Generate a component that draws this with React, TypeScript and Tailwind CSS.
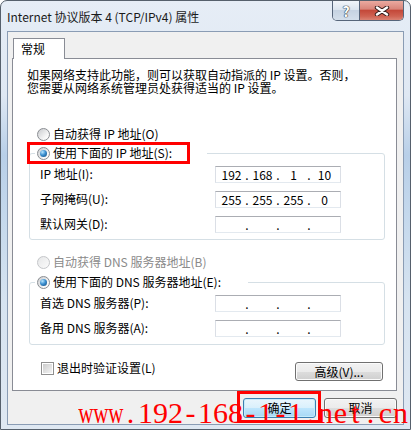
import React, { Fragment } from 'react';

function Radio({ checked, disabled }: { checked?: boolean; disabled?: boolean }) {
  return (
    <span
      className={
        disabled
          ? 'flex h-[13px] w-[13px] shrink-0 items-center justify-center rounded-full border border-[#c4c6c9] bg-[linear-gradient(135deg,#e6e7e8,#fbfbfb)]'
          : 'flex h-[13px] w-[13px] shrink-0 items-center justify-center rounded-full border border-[#8a8d92] bg-[linear-gradient(135deg,#c9cbce,#f7f7f7_70%,#ffffff)]'
      }
    >
      {checked && (
        <span className="h-[7px] w-[7px] rounded-full bg-[radial-gradient(circle_at_35%_30%,#b9e6ff_0%,#3a8fd0_45%,#12487a_100%)]" />
      )}
    </span>
  );
}

function IpField({ values }: { values?: string[] }) {
  const v = values ?? ['', '', '', ''];
  return (
    <div className="flex h-[17px] w-[126px] items-center border border-[#abadb3] border-b-[#e3e9ef] border-l-[#dbdfe6] border-r-[#dbdfe6] bg-white pl-[3px] leading-[15px]">
      {v.map((x, i) => (
        <Fragment key={i}>
          {i > 0 && <span className="w-[6px] text-center">.</span>}
          <span className="w-[25px] text-center">{x}</span>
        </Fragment>
      ))}
    </div>
  );
}

function WinButton({ children, primary, className }: { children: React.ReactNode; primary?: boolean; className?: string }) {
  return (
    <div
      className={
        (primary
          ? 'border-[#3c7fb1] bg-[linear-gradient(180deg,#eaf6fd_0%,#d9f0fc_50%,#bee6fd_51%,#a7d9f5_100%)] shadow-[inset_0_0_0_1px_#c5ecfb] '
          : 'border-[#707070] bg-[linear-gradient(180deg,#f2f2f2_0%,#ebebeb_50%,#dddddd_51%,#cfcfcf_100%)] shadow-[inset_0_0_0_1px_#fbfbfb] ') +
        'flex items-center justify-center rounded-[3px] border ' +
        (className ?? '')
      }
    >
      {children}
    </div>
  );
}

const WATERMARK = 'www.192-168-1-1.net.cn';

export default function App() {
  return (
    <div className="relative h-[430px] w-[411px] overflow-hidden bg-white font-['Noto_Sans_CJK_SC',sans-serif] text-[12px] text-black">
      <div className="flex h-full w-full flex-col rounded-t-[7px] border border-[#56606c] bg-[linear-gradient(180deg,#e6edf6_0%,#dfe8f3_22%,#b8cfe8_36%,#c4d8ec_50%,#d6e3f0_70%,#dfe8f2_100%)]">
        {/* title bar */}
        <div className="flex h-[30px] shrink-0">
          <div className="flex items-center pl-[6px] pt-[2px] text-[12px] text-[#1a1a1a]">
            Internet 协议版本 4 (TCP/IPv4) 属性
          </div>
          <div className="ml-auto mr-[6px] flex h-[20px] self-start overflow-hidden rounded-b-[5px] border border-t-0 border-[#56657a]">
            <div className="flex w-[27px] items-center justify-center border-r border-[#56657a] bg-[linear-gradient(180deg,#f1f5fa_0%,#dce5ef_45%,#c6d3e2_50%,#d4dfeb_100%)]">
              <span className="text-[14px] font-bold leading-none text-white [text-shadow:0_0_1px_#2a3440,0_0_1px_#2a3440,0_0_1px_#2a3440]">
                ?
              </span>
            </div>
            <div className="flex w-[43px] items-center justify-center bg-[linear-gradient(180deg,#ebaaa0_0%,#d9857a_42%,#c4493a_50%,#cf6252_80%,#da8273_100%)]">
              <svg width="16" height="10" viewBox="0 0 16 10">
                <path d="M3 1.5 L13 8.5 M13 1.5 L3 8.5" stroke="#3b2220" strokeWidth="4.4" strokeLinecap="round" fill="none" />
                <path d="M3 1.5 L13 8.5 M13 1.5 L3 8.5" stroke="#ffffff" strokeWidth="2.4" strokeLinecap="round" fill="none" />
              </svg>
            </div>
          </div>
        </div>

        {/* client area */}
        <div className="mx-[6px] mb-[4px] flex flex-1 flex-col border border-[#8a9cb4] bg-[#f0f0f0] pl-[4px] pr-[6px] pt-[6px]">
          <div className="relative z-10 -mb-px ml-[1px] h-[21px] w-[52px] border border-b-0 border-[#898c95] bg-white pl-[7px] leading-[19px]">
            常规
          </div>
          <div className="flex h-[333px] flex-col border border-[#898c95] bg-white">
            <div className="mt-[9px] pl-[14px] leading-[13px]">
              <div>如果网络支持此功能，则可以获取自动指派的 IP 设置。否则，</div>
              <div>您需要从网络系统管理员处获得适当的 IP 设置。</div>
            </div>

            <div className="ml-[24px] mt-[33px] flex h-[14px] items-center gap-[3px]">
              <Radio />
              <span>自动获得 IP 地址(O)</span>
            </div>

            <div className="ml-[16px] mr-[11px] mt-[12px] flex flex-col rounded-[3px] border border-[#d5dfe5] pb-[6px] pl-[10px]">
              <div className="-ml-[5px] -mt-[8px] flex h-[14px] w-[172px] items-center gap-[3px] bg-white px-[2px]">
                <Radio checked />
                <span>使用下面的 IP 地址(S):</span>
              </div>
              <div className="mt-[5px] flex items-center">
                <span className="w-[175px]">IP 地址(I):</span>
                <IpField values={['192', '168', '1', '10']} />
              </div>
              <div className="mt-[7px] flex items-center">
                <span className="w-[175px]">子网掩码(U):</span>
                <IpField values={['255', '255', '255', '0']} />
              </div>
              <div className="mt-[7px] flex items-center">
                <span className="w-[175px]">默认网关(D):</span>
                <IpField />
              </div>
            </div>

            <div className="ml-[24px] mt-[15px] flex h-[14px] items-center gap-[3px] text-[#8a8a8a]">
              <Radio disabled />
              <span>自动获得 DNS 服务器地址(B)</span>
            </div>

            <div className="ml-[16px] mr-[11px] mt-[13px] flex flex-col rounded-[3px] border border-[#d5dfe5] pb-[7px] pl-[10px]">
              <div className="-ml-[5px] -mt-[8px] flex h-[14px] w-[213px] items-center gap-[3px] bg-white px-[2px]">
                <Radio checked />
                <span>使用下面的 DNS 服务器地址(E):</span>
              </div>
              <div className="mt-[5px] flex items-center">
                <span className="w-[175px]">首选 DNS 服务器(P):</span>
                <IpField />
              </div>
              <div className="mt-[7px] flex items-center">
                <span className="w-[175px]">备用 DNS 服务器(A):</span>
                <IpField />
              </div>
            </div>

            <div className="ml-[28px] mr-[13px] mt-[16px] flex items-start justify-between">
              <div className="flex h-[14px] items-center gap-[3px]">
                <span className="flex h-[13px] w-[13px] items-center justify-center border border-[#8f8f8f] bg-white">
                  <span className="h-[9px] w-[9px] bg-[linear-gradient(135deg,#cbcbcb,#f4f4f4)]" />
                </span>
                <span>退出时验证设置(L)</span>
              </div>
              <WinButton className="mt-[1px] h-[19px] w-[88px]">高级(V)...</WinButton>
            </div>
          </div>

          <div className="mt-[7px] flex justify-end gap-[8px]">
            <WinButton primary className="h-[20px] w-[73px]">确定</WinButton>
            <WinButton className="h-[20px] w-[73px]">取消</WinButton>
          </div>
        </div>
      </div>

      {/* annotation overlays */}
      <div className="absolute left-[27px] top-[142px] h-[22px] w-[163px] border-[3px] border-[#ff0000]" />
      <div className="absolute left-[237px] top-[391px] h-[32px] w-[84px] border-[3px] border-[#ff0000]" />
      <div className="absolute left-[78px] top-[398px] flex font-['Liberation_Serif',serif] text-[30px] leading-none text-[#ff0000]">
        {WATERMARK.split('').map((c, i) => (
          <span key={i} className="flex w-[15px] justify-center">
            <span className={c === 'w' ? 'inline-block scale-x-70' : 'inline-block'}>{c}</span>
          </span>
        ))}
      </div>
    </div>
  );
}
